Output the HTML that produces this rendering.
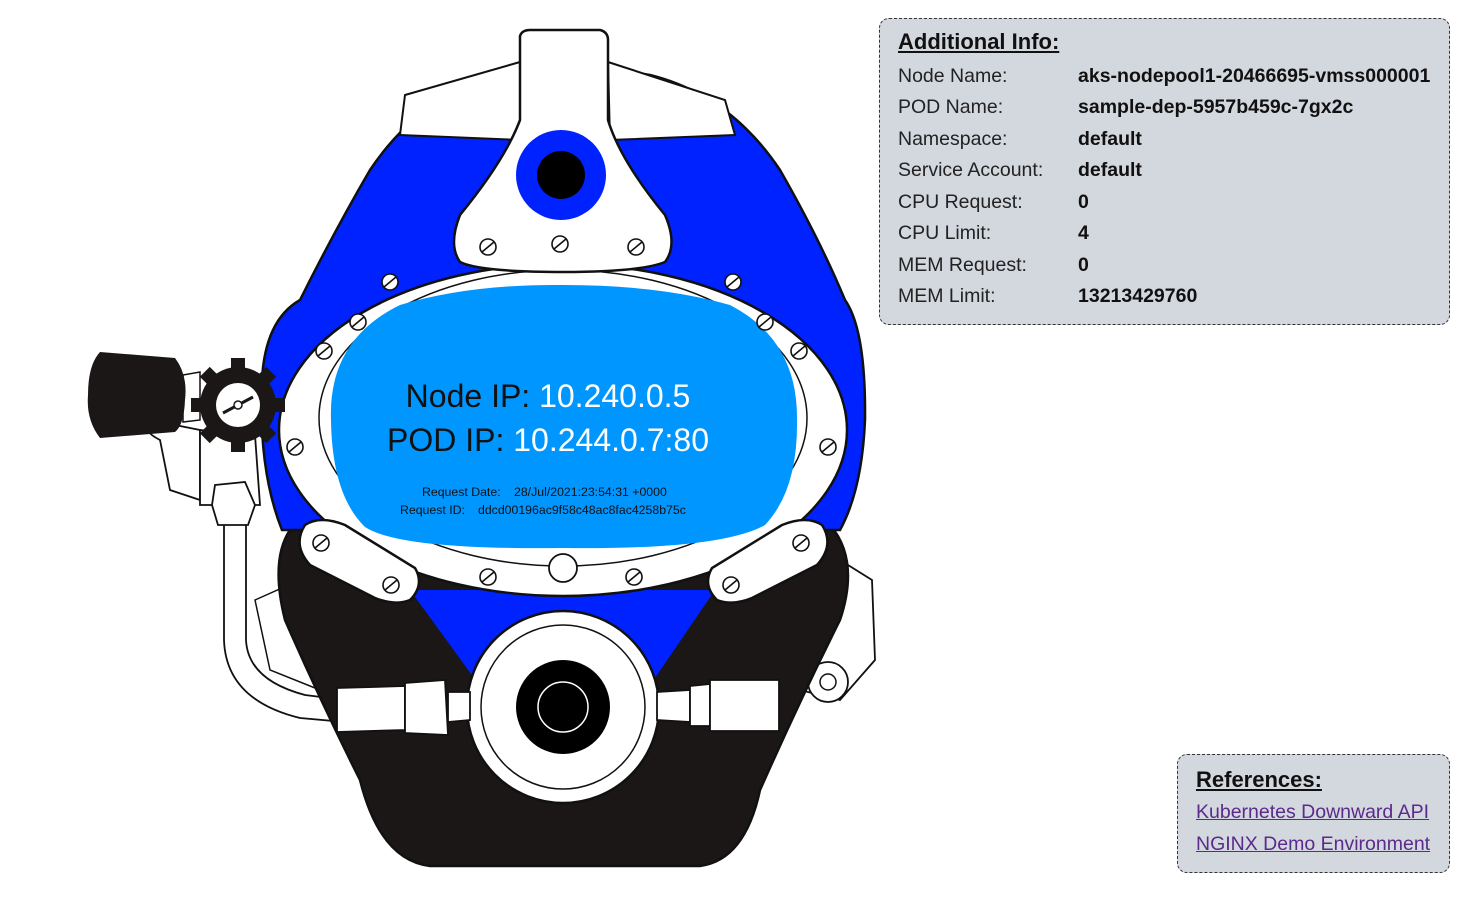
<!DOCTYPE html>
<html><head><meta charset="utf-8"><style>
body{margin:0;width:1472px;height:907px;background:#fff;font-family:"Liberation Sans",Arial,sans-serif;position:relative;overflow:hidden}
.box{position:absolute;background:#d3d7de;border:1px dashed #333;border-radius:10px;box-sizing:border-box}
.t{position:absolute;font-size:22px;font-weight:bold;text-decoration:underline;color:#111;white-space:nowrap}
.r{position:absolute;font-size:19.5px;color:#222;white-space:nowrap;width:540px}
.v{position:absolute;left:180px;top:0;font-weight:bold;font-size:19.5px;color:#111;white-space:nowrap}
a{color:#5b2a8c;position:absolute;font-size:19.5px;text-decoration:underline;white-space:nowrap}
</style></head><body>
<svg width="1472" height="907" style="position:absolute;left:0;top:0" stroke="#111" stroke-width="2.5">
<defs>
<g id="s" fill="#fff" stroke="#111" stroke-width="1.6"><circle r="8"/><path d="M-6,5 L6,-5"/></g>
<rect id="tt" x="-7" y="-47" width="14" height="12" fill="#1a1716" stroke="none"/>
</defs>
<path d="M224,520 L224,640 Q226,700 300,718 L345,722 L345,700 L305,695 Q248,680 246,640 L246,520 Z" fill="#fff" stroke-width="1.8"/>
<path d="M255,600 L300,580 L320,690 L270,670 Z" fill="#fff" stroke-width="1.5"/>
<path d="M840,560 L872,580 L875,660 L840,700 L800,690 L820,600 Z" fill="#fff" stroke-width="1.8"/>
<circle cx="828" cy="682" r="20" fill="#fff" stroke-width="1.8"/><circle cx="828" cy="682" r="8" fill="#fff" stroke-width="1.5"/>
<path d="M290,530 Q270,560 285,620 Q320,700 360,780 Q380,860 430,866 L700,866 Q745,860 760,790 Q800,700 840,620 Q860,560 830,525 Z" fill="#1a1716"/>
<path d="M282,530 Q258,470 262,380 Q265,320 300,300 Q335,230 370,170 Q410,110 470,85 Q560,60 650,75 Q730,95 780,170 Q820,240 845,300 Q866,330 865,420 Q862,490 840,530 Z" fill="#0022ff"/>
<path d="M410,590 L715,590 L640,700 L490,700 Z" fill="#0022ff" stroke="none"/>
<path d="M405,95 L520,62 L520,140 L400,135 Z" fill="#fff" stroke-width="2"/>
<path d="M608,62 L725,100 L735,135 L610,140 Z" fill="#fff" stroke-width="2"/>
<!-- white frame -->
<ellipse cx="563" cy="430" rx="284" ry="166" fill="#fff"/>
<ellipse cx="563" cy="418" rx="244" ry="148" fill="#fff" stroke-width="1.5"/>
<path d="M331,420 Q328,340 400,305 Q470,284 563,285 Q660,285 730,305 Q798,340 797,420 Q798,490 765,525 Q720,550 563,548 Q400,550 365,527 Q332,495 331,420 Z" fill="#0096ff" stroke="none"/>
<path d="M520,36 Q522,30 530,30 L600,30 Q608,32 608,40 L608,120 Q620,160 665,215 Q678,245 665,262 Q640,272 563,272 Q480,272 460,262 Q448,245 460,215 Q505,160 520,120 Z" fill="#fff"/>
<circle cx="561" cy="175" r="45" fill="#0022ff" stroke="none"/>
<circle cx="561" cy="175" r="24" fill="#000" stroke="none"/>
<path d="M305,525 Q320,515 345,525 L415,568 Q425,585 410,600 Q395,606 375,598 L310,565 Q292,545 305,525 Z" fill="#fff"/>
<path d="M822,525 Q807,515 782,525 L712,568 Q702,585 717,600 Q732,606 752,598 L817,565 Q835,545 822,525 Z" fill="#fff"/>
<circle cx="563" cy="568" r="14" fill="#fff" stroke-width="1.8"/>
<circle cx="563" cy="707" r="96" fill="#fff"/>
<circle cx="563" cy="707" r="82" fill="#fff" stroke-width="1.5"/>
<circle cx="563" cy="707" r="47" fill="#000" stroke="none"/>
<circle cx="563" cy="707" r="25" fill="none" stroke="#fff" stroke-width="1.5"/>
<path d="M337,688 L405,686 L405,730 L337,732 Z" fill="#fff" stroke-width="1.8"/>
<path d="M405,683 L445,680 L448,735 L405,733 Z" fill="#fff" stroke-width="1.8"/>
<path d="M448,692 L470,692 L470,720 L448,722 Z" fill="#fff" stroke-width="1.8"/>
<path d="M657,692 L690,690 L690,722 L657,720 Z" fill="#fff" stroke-width="1.8"/>
<path d="M690,686 L710,684 L710,726 L690,726 Z" fill="#fff" stroke-width="1.8"/>
<path d="M710,680 L779,680 L779,731 L710,731 Z" fill="#fff" stroke-width="1.8"/>
<path d="M160,440 Q140,430 150,420 L200,430 L200,500 L170,490 Z" fill="#fff" stroke-width="1.8"/>
<path d="M200,430 L255,435 L260,505 L200,505 Z" fill="#fff" stroke-width="1.8"/>
<path d="M215,485 L245,482 L255,505 L248,525 L218,525 L212,505 Z" fill="#fff" stroke-width="1.8"/>
<path d="M183,375 L200,372 L200,420 L183,422 Z" fill="#fff" stroke-width="1.5"/>
<path d="M100,352 L175,358 Q188,375 185,400 Q184,425 175,432 L100,438 Q86,420 88,395 Q88,365 100,352 Z" fill="#1a1716" stroke="none"/>
<g transform="translate(238,405)" stroke="none">
<circle r="38" fill="#1a1716"/>
<use href="#tt"/><use href="#tt" transform="rotate(45)"/><use href="#tt" transform="rotate(90)"/><use href="#tt" transform="rotate(135)"/><use href="#tt" transform="rotate(180)"/><use href="#tt" transform="rotate(225)"/><use href="#tt" transform="rotate(270)"/><use href="#tt" transform="rotate(315)"/>
<circle r="22" fill="#fff"/>
<path d="M-15,8 L15,-8" stroke="#1a1716" stroke-width="3"/>
<circle r="4" fill="#fff" stroke="#1a1716" stroke-width="1.5"/>
</g>
<use href="#s" x="488" y="247"/><use href="#s" x="560" y="244"/><use href="#s" x="636" y="247"/>
<use href="#s" x="390" y="282"/><use href="#s" x="358" y="322"/><use href="#s" x="324" y="351"/><use href="#s" x="295" y="447"/>
<use href="#s" x="733" y="282"/><use href="#s" x="765" y="322"/><use href="#s" x="799" y="351"/><use href="#s" x="828" y="447"/>
<use href="#s" x="321" y="543"/><use href="#s" x="391" y="585"/><use href="#s" x="488" y="577"/><use href="#s" x="634" y="577"/><use href="#s" x="801" y="543"/><use href="#s" x="731" y="585"/>
<g stroke="none" font-family="Liberation Sans, Arial, sans-serif">
<text x="548" y="407" font-size="32" text-anchor="middle"><tspan fill="#111">Node IP: </tspan><tspan fill="#fff">10.240.0.5</tspan></text>
<text x="548" y="451" font-size="32" text-anchor="middle"><tspan fill="#111">POD IP: </tspan><tspan fill="#fff">10.244.0.7:80</tspan></text>
<text y="496" font-size="12.3" fill="#111"><tspan x="422">Request Date:</tspan><tspan x="514">28/Jul/2021:23:54:31 +0000</tspan></text>
<text y="514" font-size="12.3" fill="#111"><tspan x="400">Request ID:</tspan><tspan x="478">ddcd00196ac9f58c48ac8fac4258b75c</tspan></text>
</g>
</svg>

<div class="box" style="left:879px;top:18px;width:571px;height:307px">
<div class="t" style="left:18px;top:10px">Additional Info:</div>
<div class="r" style="left:18px;top:46px">Node Name:<span class="v">aks-nodepool1-20466695-vmss000001</span></div>
<div class="r" style="left:18px;top:77px">POD Name:<span class="v">sample-dep-5957b459c-7gx2c</span></div>
<div class="r" style="left:18px;top:109px">Namespace:<span class="v">default</span></div>
<div class="r" style="left:18px;top:140px">Service Account:<span class="v">default</span></div>
<div class="r" style="left:18px;top:172px">CPU Request:<span class="v">0</span></div>
<div class="r" style="left:18px;top:203px">CPU Limit:<span class="v">4</span></div>
<div class="r" style="left:18px;top:235px">MEM Request:<span class="v">0</span></div>
<div class="r" style="left:18px;top:266px">MEM Limit:<span class="v">13213429760</span></div>
</div>

<div class="box" style="left:1177px;top:754px;width:273px;height:119px">
<div class="t" style="left:18px;top:12px">References:</div>
<a style="left:18px;top:46px">Kubernetes Downward API</a>
<a style="left:18px;top:78px">NGINX Demo Environment</a>
</div>
</body></html>
